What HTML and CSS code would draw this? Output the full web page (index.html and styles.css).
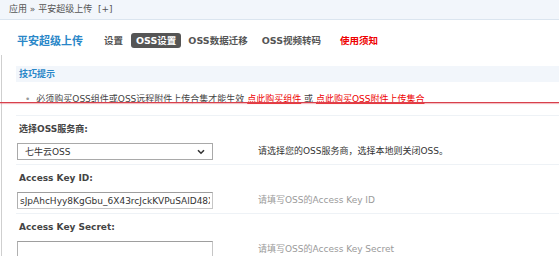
FILE: index.html
```html
<!DOCTYPE html>
<html>
<head>
<meta charset="utf-8">
<link rel="stylesheet" href="styles.css">
</head>
<body>
<div class="crumb">应用 &raquo; 平安超级上传 &nbsp;[+]</div>
<div class="head">
  <h3 class="title">平安超级上传</h3>
  <ul class="tabs">
    <li class="tab">设置</li>
    <li class="tab active">OSS设置</li>
    <li class="tab">OSS数据迁移</li>
    <li class="tab">OSS视频转码</li>
    <li class="tab notice">使用须知</li>
  </ul>
</div>
<div class="frame">
  <div class="tips">
    <div class="tips-head">技巧提示</div>
    <div class="tips-row"><span class="dot">•</span>必须购买OSS组件或OSS远程附件上传合集才能生效 <a class="buy">点此购买组件</a> 或 <a class="buy">点此购买OSS附件上传集合</a></div>
  </div>
  <div class="form">
    <div class="label">选择OSS服务商:</div>
    <div class="field">
      <div class="select"><span>七牛云OSS</span><svg width="8" height="6" viewBox="0 0 8 6"><path d="M1 1.2 L4 4.2 L7 1.2" fill="none" stroke="#333" stroke-width="1.6"/></svg></div>
      <span class="hint">请选择您的OSS服务商，选择本地则关闭OSS。</span>
    </div>
    <div class="label">Access Key ID:</div>
    <div class="field">
      <input class="text" type="text" value="sJpAhcHyy8KgGbu_6X43rcJckKVPuSAlD48Xz">
      <span class="hint muted">请填写OSS的Access Key ID</span>
    </div>
    <div class="label">Access Key Secret:</div>
    <div class="field">
      <input class="text" type="text" value="">
      <span class="hint muted">请填写OSS的Access Key Secret</span>
    </div>
  </div>
  <div class="redline"></div>
</div>
</body>
</html>
```
FILE: styles.css
```css
html, body {
  margin: 0;
  padding: 0;
  background: #fff;
}
body {
  font-family: "DejaVu Sans", "Noto Sans CJK SC", sans-serif;
  font-size: 9px;
  color: #333;
  overflow: hidden;
}
.crumb {
  height: 19px;
  line-height: 19px;
  padding-left: 9px;
  background: #f2f6fb;
  border-bottom: 1px solid #dbe5ef;
  color: #555;
}
.head {
  display: flex;
  align-items: center;
  height: 40px;
  padding-left: 17px;
}
.title {
  margin: 0;
  font-size: 11px;
  font-weight: bold;
  color: #2a87c8;
  width: 84px;
}
.tabs {
  display: flex;
  align-items: center;
  list-style: none;
  margin: 0;
  padding: 0;
}
.tab {
  font-size: 9.5px;
  font-weight: bold;
  color: #555;
  padding: 0 3px;
  margin-right: 8px;
  line-height: 15px;
}
.tab:first-child {
  margin-right: 5px;
}
.tab.active {
  background: #555;
  color: #fff;
  border-radius: 3px;
  padding: 0 5px;
  margin-right: 4px;
}
.tab.notice {
  color: #e00;
  margin-left: 5px;
}
.frame {
  position: relative;
  margin-top: -5px;
  margin-left: 1px;
  border-left: 1px solid #cfcfcf;
  padding-top: 11px;
}
.tips {
  margin-left: 14px;
}
.tips-head {
  height: 16px;
  line-height: 16px;
  padding-left: 3px;
  background: #f2f6fb;
  color: #2a87c8;
  font-weight: bold;
}
.tips-row {
  height: 33px;
  line-height: 35px;
  padding-left: 9px;
  border-bottom: 1px solid #eef2f6;
  color: #444;
  white-space: nowrap;
}
.dot {
  color: #999;
  margin-right: 6px;
}
.buy {
  color: #e00;
  text-decoration: underline;
}
.form {
  margin-left: 14px;
}
.label {
  height: 26px;
  line-height: 26px;
  padding-left: 3px;
  font-weight: bold;
  color: #444;
}
.field {
  display: flex;
  align-items: flex-start;
  height: 21px;
  padding-top: 1px;
  border-bottom: 1px solid #eef2f6;
}
.select {
  box-sizing: border-box;
  width: 196px;
  height: 17px;
  margin-left: 1px;
  border: 1px solid #a9a9a9;
  display: flex;
  align-items: center;
  justify-content: space-between;
  padding: 0 7px 0 7px;
  color: #333;
}
.text {
  box-sizing: border-box;
  width: 196px;
  height: 17px;
  margin: 0 0 0 1px;
  padding: 0 2px;
  border: 1px solid #c6c6c6;
  border-top-color: #9e9e9e;
  border-left-color: #b0b0b0;
  font-family: "DejaVu Sans", sans-serif;
  font-size: 9px;
  color: #333;
  outline: none;
}
.hint {
  margin-left: 45px;
  line-height: 17px;
  color: #333;
}
.hint.muted {
  color: #9a9a9a;
}
.redline {
  position: absolute;
  left: -2px;
  right: 0;
  top: 47px;
  height: 1px;
  background: #d8404c;
  box-shadow: 0 1px 1px rgba(230, 120, 130, 0.6);
}
```
